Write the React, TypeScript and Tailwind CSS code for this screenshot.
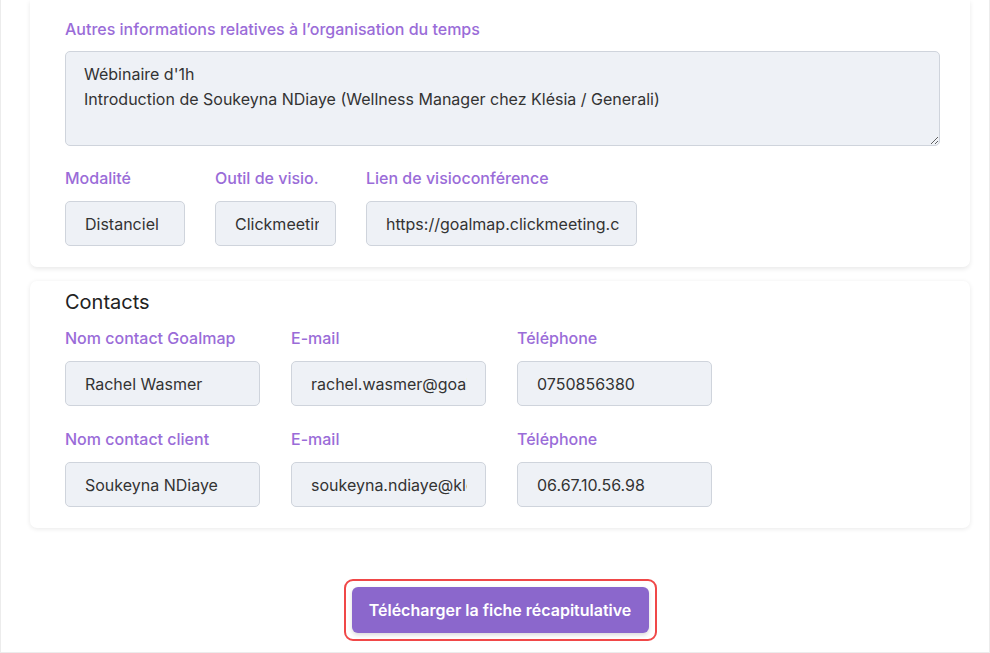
import React from 'react';

const font = { fontFamily: 'Inter, "Noto Sans", sans-serif' };

function Field({ label, value, width, pr = 'pr-[4px]' }: { label: string; value: string; width: string; pr?: string }) {
  return (
    <div className="flex flex-col">
      <label className="h-5 text-[16px] leading-5 font-medium text-[#9a6cd8] whitespace-nowrap">{label}</label>
      <input
        readOnly
        value={value}
        className={`${width} ${pr} mt-[13px] h-[45px] rounded-[5px] border border-[#cfd4dc] bg-[#eef1f6] pl-[19px] text-[16px] text-[#333] outline-none`}
      />
    </div>
  );
}

export default function App() {
  return (
    <div style={font} className="w-[990px] h-[653px] bg-white border-x border-b border-[#ececec] pl-[29px] pr-[19px] overflow-hidden">
      {/* Organisation card */}
      <div className="rounded-b-[7px] bg-white shadow-[0_2px_5px_rgba(0,0,0,0.09)] pl-[35px] pr-[30px] pt-[19px] pb-[21px]">
        <label className="block h-5 text-[16px] leading-5 font-medium text-[#9a6cd8]">
          Autres informations relatives à l’organisation du temps
        </label>
        <textarea
          readOnly
          defaultValue={"Wébinaire d'1h\nIntroduction de Soukeyna NDiaye (Wellness Manager chez Klésia / Generali)"}
          className="mt-3 block w-full h-[95px] rounded-[5px] border border-[#cfd4dc] bg-[#eef1f6] px-[18px] pt-[10px] text-[16px] leading-[25px] text-[#333] outline-none"
        />
        <div className="mt-[22px] flex gap-[30px]">
          <Field label="Modalité" value="Distanciel" width="w-[120px]" />
          <Field label="Outil de visio." value="Clickmeeting" width="w-[121px]" pr="pr-[16px]" />
          <Field label="Lien de visioconférence" value="https://goalmap.clickmeeting.com/webinaire" width="w-[271px]" pr="pr-[17px]" />
        </div>
      </div>

      {/* Contacts card */}
      <div className="mt-[14px] rounded-[7px] bg-white shadow-[0_1px_5px_rgba(0,0,0,0.09)] pl-[35px] pr-[30px] pt-[7px] pb-[21px]">
        <h2 className="text-[20px] leading-7 text-[#222]">Contacts</h2>
        <div className="mt-3 flex gap-[31px]">
          <Field label="Nom contact Goalmap" value="Rachel Wasmer" width="w-[195px]" />
          <Field label="E-mail" value="rachel.wasmer@goalmap.fr" width="w-[195px]" pr="pr-[18px]" />
          <Field label="Téléphone" value="0750856380" width="w-[195px]" />
        </div>
        <div className="mt-[23px] flex gap-[31px]">
          <Field label="Nom contact client" value="Soukeyna NDiaye" width="w-[195px]" />
          <Field label="E-mail" value="soukeyna.ndiaye@klesia.fr" width="w-[195px]" pr="pr-[18px]" />
          <Field label="Téléphone" value="06.67.10.56.98" width="w-[195px]" />
        </div>
      </div>

      <div className="mt-[51px] flex justify-center">
        <div className="rounded-[9px] border-2 border-[#f04848] p-[6px]">
          <button className="h-[46px] w-[297px] rounded-[6px] bg-[#8b67cc] text-[16px] font-semibold text-white shadow-[0_2px_4px_rgba(0,0,0,0.15)]">
            Télécharger la fiche récapitulative
          </button>
        </div>
      </div>
    </div>
  );
}
